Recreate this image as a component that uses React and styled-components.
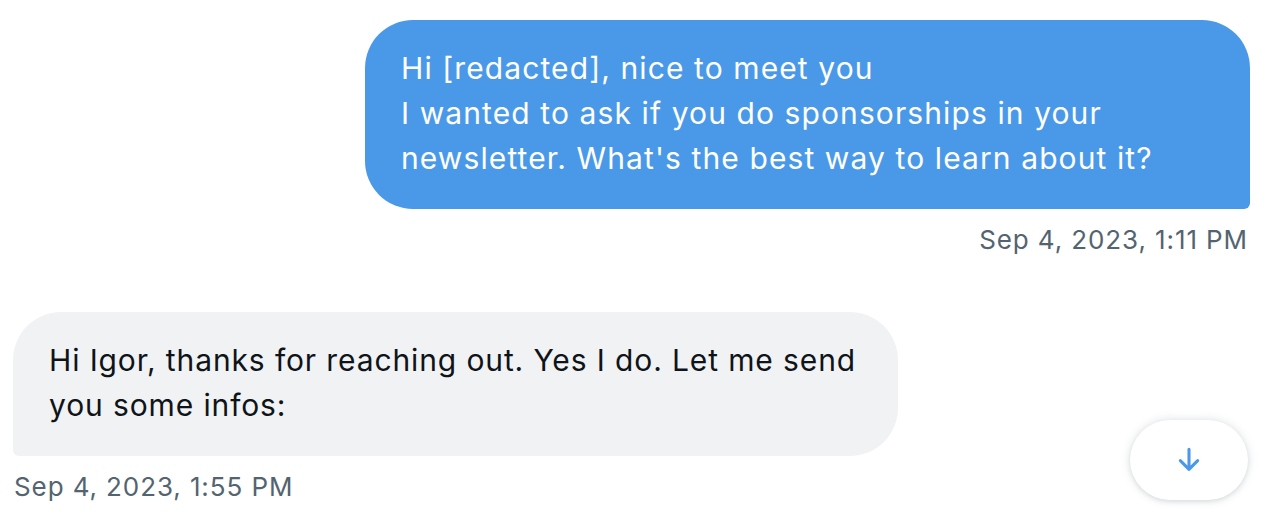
import React from 'react';
import styled, { createGlobalStyle } from 'styled-components';

const GlobalStyle = createGlobalStyle`
  html, body {
    margin: 0;
    padding: 0;
    background: #ffffff;
  }
  body {
    font-family: Inter, "Noto Sans", "Liberation Sans", sans-serif;
  }
`;

const Thread = styled.div`
  position: relative;
  width: 1280px;
  height: 520px;
  box-sizing: border-box;
  padding: 20px 30px 0 13px;
  display: flex;
  flex-direction: column;
  overflow: hidden;
`;

const Message = styled.div`
  display: flex;
  flex-direction: column;
  align-items: ${(p) => (p.$mine ? 'flex-end' : 'flex-start')};
  margin-bottom: ${(p) => (p.$mine ? '56px' : '0')};
`;

const Bubble = styled.div`
  width: 885px;
  box-sizing: border-box;
  padding: 26px 36px 28px;
  font-size: 30px;
  line-height: 45px;
  letter-spacing: ${(p) => (p.$mine ? '1.1px' : '0.88px')};
  background: ${(p) => (p.$mine ? '#4a99e9' : '#f1f2f4')};
  color: ${(p) => (p.$mine ? '#ffffff' : '#0f1419')};
  border-radius: ${(p) => (p.$mine ? '48px 48px 6px 48px' : '48px 48px 48px 6px')};
`;

const Stamp = styled.div`
  margin-top: 15px;
  font-size: 26px;
  line-height: 32px;
  letter-spacing: 0.9px;
  color: #536471;
  padding: ${(p) => (p.$mine ? '0 2px 0 0' : '0 0 0 1px')};
`;

const ScrollButton = styled.button`
  position: absolute;
  right: 32px;
  bottom: 20px;
  width: 118px;
  height: 80px;
  border: none;
  border-radius: 40px;
  background: #ffffff;
  box-shadow: 0 0 10px rgba(101, 119, 134, 0.22), 0 2px 4px rgba(101, 119, 134, 0.12);
  display: flex;
  align-items: center;
  justify-content: center;
  cursor: pointer;
`;

function ArrowDown() {
  return (
    <svg width="32" height="32" viewBox="0 0 24 24" fill="none">
      <path d="M12 4v15M5.5 12.5L12 19l6.5-6.5" stroke="#4a99e9" strokeWidth="2.3" strokeLinecap="round" strokeLinejoin="round" />
    </svg>
  );
}

export default function App() {
  return (
    <>
      <GlobalStyle />
      <Thread>
        <Message $mine>
          <Bubble $mine>
            Hi [redacted], nice to meet you
            <br />
            I wanted to ask if you do sponsorships in your newsletter. What's the best way to learn about it?
          </Bubble>
          <Stamp $mine>Sep 4, 2023, 1:11 PM</Stamp>
        </Message>
        <Message>
          <Bubble>Hi Igor, thanks for reaching out. Yes I do. Let me send you some infos:</Bubble>
          <Stamp>Sep 4, 2023, 1:55 PM</Stamp>
        </Message>
        <ScrollButton aria-label="Scroll to bottom">
          <ArrowDown />
        </ScrollButton>
      </Thread>
    </>
  );
}
